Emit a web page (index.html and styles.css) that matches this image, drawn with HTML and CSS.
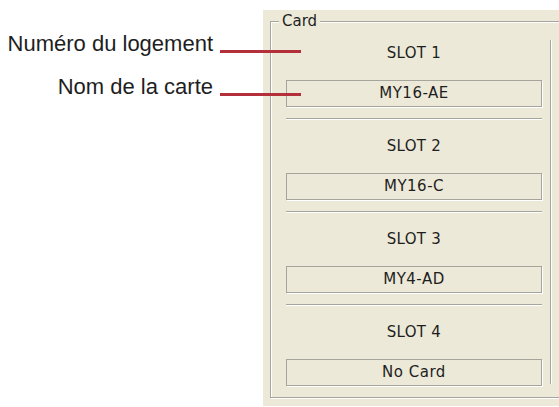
FILE: index.html
```html
<!DOCTYPE html>
<html lang="fr">
<head>
<meta charset="utf-8">
<title>Card</title>
<link rel="stylesheet" href="styles.css">
</head>
<body>
<div class="page">
  <div class="panel">
    <div class="group">
      <span class="legend">Card</span>
      <div class="group-inner">
        <div class="slots">
          <div class="slot">
            <div class="slot-title">SLOT 1</div>
            <div class="slot-box">MY16-AE</div>
          </div>
          <div class="sep"></div>
          <div class="slot">
            <div class="slot-title">SLOT 2</div>
            <div class="slot-box">MY16-C</div>
          </div>
          <div class="sep"></div>
          <div class="slot">
            <div class="slot-title">SLOT 3</div>
            <div class="slot-box">MY4-AD</div>
          </div>
          <div class="sep"></div>
          <div class="slot">
            <div class="slot-title">SLOT 4</div>
            <div class="slot-box">No Card</div>
          </div>
        </div>
        <div class="vbar"></div>
      </div>
    </div>
  </div>
  <div class="callout callout-slot"><span class="callout-text">Numéro du logement</span><span class="callout-line"></span></div>
  <div class="callout callout-name"><span class="callout-text">Nom de la carte</span><span class="callout-line"></span></div>
</div>
</body>
</html>
```

FILE: styles.css
```css
html, body {
  margin: 0;
  padding: 0;
  background: #ffffff;
}

.page {
  position: relative;
  width: 559px;
  height: 407px;
  overflow: hidden;
  display: flex;
  align-items: flex-start;
  padding-top: 10px;
  box-sizing: border-box;
}

.panel {
  margin-left: 263px;
  width: 296px;
  height: 396px;
  background: #ece9d8;
  padding: 11px 0 0 7px;
  box-sizing: border-box;
  overflow: hidden;
}

.group {
  position: relative;
  width: 310px;
  border: 1px solid #a6a59d;
  box-shadow: inset 1px 1px 0 #ffffff, 1px 1px 0 #ffffff;
  padding: 5px 0 11px 15px;
  box-sizing: border-box;
}

.legend {
  position: absolute;
  left: 8px;
  top: -9px;
  padding: 0 3px;
  background: #ece9d8;
  font-family: "DejaVu Sans", sans-serif;
  font-size: 15px;
  line-height: 17px;
  color: #1e1e1e;
}

.group-inner {
  display: flex;
  align-items: flex-start;
}

.slots {
  width: 256px;
  display: flex;
  flex-direction: column;
}

.slot {
  display: flex;
  flex-direction: column;
}

.slot-title {
  height: 53px;
  display: flex;
  align-items: center;
  justify-content: center;
  font-family: "DejaVu Sans", sans-serif;
  font-size: 15px;
  line-height: 17px;
  color: #1e1e1e;
  letter-spacing: 0.3px;
}

.slot-box {
  height: 27px;
  border: 1px solid #a6a59d;
  box-shadow: 1px 1px 0 #ffffff;
  box-sizing: border-box;
  display: flex;
  align-items: center;
  justify-content: center;
  font-family: "DejaVu Sans", sans-serif;
  font-size: 15px;
  line-height: 17px;
  color: #1e1e1e;
  letter-spacing: 0.5px;
}

.sep {
  height: 0;
  margin-top: 11px;
  border-top: 1px solid #a6a59d;
  border-bottom: 1px solid #ffffff;
}

.vbar {
  width: 0;
  height: 344px;
  margin-top: 13px;
  margin-left: 8px;
  border-left: 1px solid #a6a59d;
  border-right: 1px solid #ffffff;
}

.callout {
  position: absolute;
  left: 0;
  width: 301px;
  display: flex;
  justify-content: flex-end;
  align-items: baseline;
  font-family: "Liberation Sans", Arial, sans-serif;
  font-size: 22px;
  line-height: 22px;
  color: #1e1e1e;
}

.callout-slot {
  top: 33px;
}

.callout-name {
  top: 76px;
}

.callout-line {
  display: inline-block;
  width: 81px;
  height: 3px;
  margin-left: 7px;
  background: #b3303a;
  position: relative;
  top: 2px;
}
```
